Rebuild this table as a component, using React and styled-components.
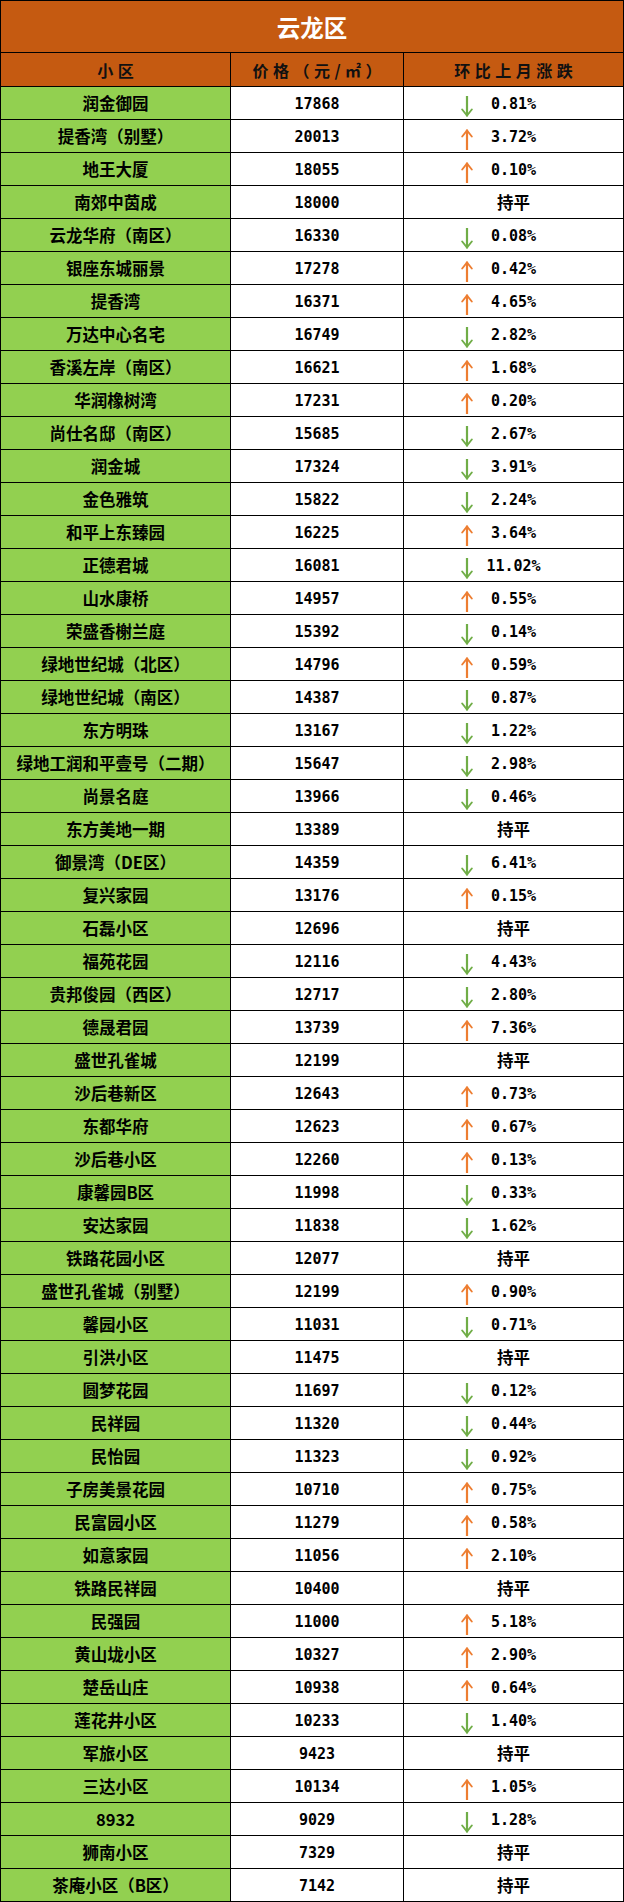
import React from "react";
import styled, { createGlobalStyle } from "styled-components";

const GlobalStyle = createGlobalStyle`
  body {
    margin: 0;
    background: #fff;
    font-family: "Noto Sans CJK SC", sans-serif;
  }
`;

const brown = "#c55a11";
const green = "#92d050";

// name, price, trend (up / down / flat), change
const rows = [
  ["润金御园", "17868", "down", "0.81%"],
  ["提香湾（别墅）", "20013", "up", "3.72%"],
  ["地王大厦", "18055", "up", "0.10%"],
  ["南郊中茵成", "18000", "flat"],
  ["云龙华府（南区）", "16330", "down", "0.08%"],
  ["银座东城丽景", "17278", "up", "0.42%"],
  ["提香湾", "16371", "up", "4.65%"],
  ["万达中心名宅", "16749", "down", "2.82%"],
  ["香溪左岸（南区）", "16621", "up", "1.68%"],
  ["华润橡树湾", "17231", "up", "0.20%"],
  ["尚仕名邸（南区）", "15685", "down", "2.67%"],
  ["润金城", "17324", "down", "3.91%"],
  ["金色雅筑", "15822", "down", "2.24%"],
  ["和平上东臻园", "16225", "up", "3.64%"],
  ["正德君城", "16081", "down", "11.02%"],
  ["山水康桥", "14957", "up", "0.55%"],
  ["荣盛香榭兰庭", "15392", "down", "0.14%"],
  ["绿地世纪城（北区）", "14796", "up", "0.59%"],
  ["绿地世纪城（南区）", "14387", "down", "0.87%"],
  ["东方明珠", "13167", "down", "1.22%"],
  ["绿地工润和平壹号（二期）", "15647", "down", "2.98%"],
  ["尚景名庭", "13966", "down", "0.46%"],
  ["东方美地一期", "13389", "flat"],
  ["御景湾（DE区）", "14359", "down", "6.41%"],
  ["复兴家园", "13176", "up", "0.15%"],
  ["石磊小区", "12696", "flat"],
  ["福苑花园", "12116", "down", "4.43%"],
  ["贵邦俊园（西区）", "12717", "down", "2.80%"],
  ["德晟君园", "13739", "up", "7.36%"],
  ["盛世孔雀城", "12199", "flat"],
  ["沙后巷新区", "12643", "up", "0.73%"],
  ["东都华府", "12623", "up", "0.67%"],
  ["沙后巷小区", "12260", "up", "0.13%"],
  ["康馨园B区", "11998", "down", "0.33%"],
  ["安达家园", "11838", "down", "1.62%"],
  ["铁路花园小区", "12077", "flat"],
  ["盛世孔雀城（别墅）", "12199", "up", "0.90%"],
  ["馨园小区", "11031", "down", "0.71%"],
  ["引洪小区", "11475", "flat"],
  ["圆梦花园", "11697", "down", "0.12%"],
  ["民祥园", "11320", "down", "0.44%"],
  ["民怡园", "11323", "down", "0.92%"],
  ["子房美景花园", "10710", "up", "0.75%"],
  ["民富园小区", "11279", "up", "0.58%"],
  ["如意家园", "11056", "up", "2.10%"],
  ["铁路民祥园", "10400", "flat"],
  ["民强园", "11000", "up", "5.18%"],
  ["黄山垅小区", "10327", "up", "2.90%"],
  ["楚岳山庄", "10938", "up", "0.64%"],
  ["莲花井小区", "10233", "down", "1.40%"],
  ["军旅小区", "9423", "flat"],
  ["三达小区", "10134", "up", "1.05%"],
  ["8932", "9029", "down", "1.28%"],
  ["狮南小区", "7329", "flat"],
  ["茶庵小区（B区）", "7142", "flat"],
];

const Arrow = ({ dir }) => {
  const color = dir === "up" ? "#ed7d31" : "#70ad47";
  return (
    <ArrowMark width="12" height="21" viewBox="0 0 12 21">
      {dir === "up" ? (
        <g stroke={color} strokeWidth="2.2" fill="none" strokeLinecap="round">
          <line x1="6" y1="1.5" x2="6" y2="21" />
          <polyline points="1.2,7.5 6,1.5 10.8,7.5" strokeWidth="1.9" />
        </g>
      ) : (
        <g stroke={color} strokeWidth="2.2" fill="none" strokeLinecap="round">
          <line x1="6" y1="0" x2="6" y2="19.5" />
          <polyline points="1.2,13.5 6,19.5 10.8,13.5" strokeWidth="1.9" />
        </g>
      )}
    </ArrowMark>
  );
};

const App = () => {
  return (
    <>
      <GlobalStyle />
      <Table>
        <Title>云龙区</Title>
        <Head>小区</Head>
        <Head>价格（元/㎡）</Head>
        <Head>环比上月涨跌</Head>
        {rows.map(([name, price, trend, change], i) => (
          <React.Fragment key={i}>
            <NameCell>{name}</NameCell>
            <Cell>
              <Num>{price}</Num>
            </Cell>
            <Cell>
              {trend === "flat" ? (
                <Flat>持平</Flat>
              ) : (
                <>
                  <Arrow dir={trend} />
                  <Num>{change}</Num>
                </>
              )}
            </Cell>
          </React.Fragment>
        ))}
      </Table>
    </>
  );
};

const Table = styled.div`
  display: grid;
  grid-template-columns: 229px 172px 219px;
  gap: 1px;
  padding: 1px;
  width: 622px;
  background: #000;
`;

const Title = styled.div`
  grid-column: 1 / -1;
  height: 51px;
  display: flex;
  align-items: center;
  justify-content: center;
  padding-top: 2px;
  box-sizing: border-box;
  background: ${brown};
  color: #fff;
  font-size: 23.5px;
  font-weight: 700;
  line-height: 1;
`;

const Head = styled.div`
  height: 33px;
  display: flex;
  align-items: center;
  justify-content: center;
  background: ${brown};
  color: #111;
  font-size: 16px;
  font-weight: 700;
  letter-spacing: 4.5px;
  text-indent: 4.5px;
  line-height: 1;
`;

const Cell = styled.div`
  position: relative;
  height: 32px;
  display: flex;
  align-items: center;
  justify-content: center;
  background: #fff;
  color: #000;
  line-height: 1;
`;

const NameCell = styled(Cell)`
  background: ${green};
  font-size: 16.5px;
  font-weight: 700;
  padding-top: 1px;
  box-sizing: border-box;
`;

const Num = styled.span`
  font-family: "DejaVu Sans Mono", "Noto Sans CJK SC", monospace;
  font-size: 15px;
  font-weight: 700;
  padding-top: 2px;
`;

const Flat = styled.span`
  font-size: 16.5px;
  font-weight: 700;
  padding-top: 1px;
`;

const ArrowMark = styled.svg`
  position: absolute;
  left: 57px;
  top: 9px;
`;

export default App;
